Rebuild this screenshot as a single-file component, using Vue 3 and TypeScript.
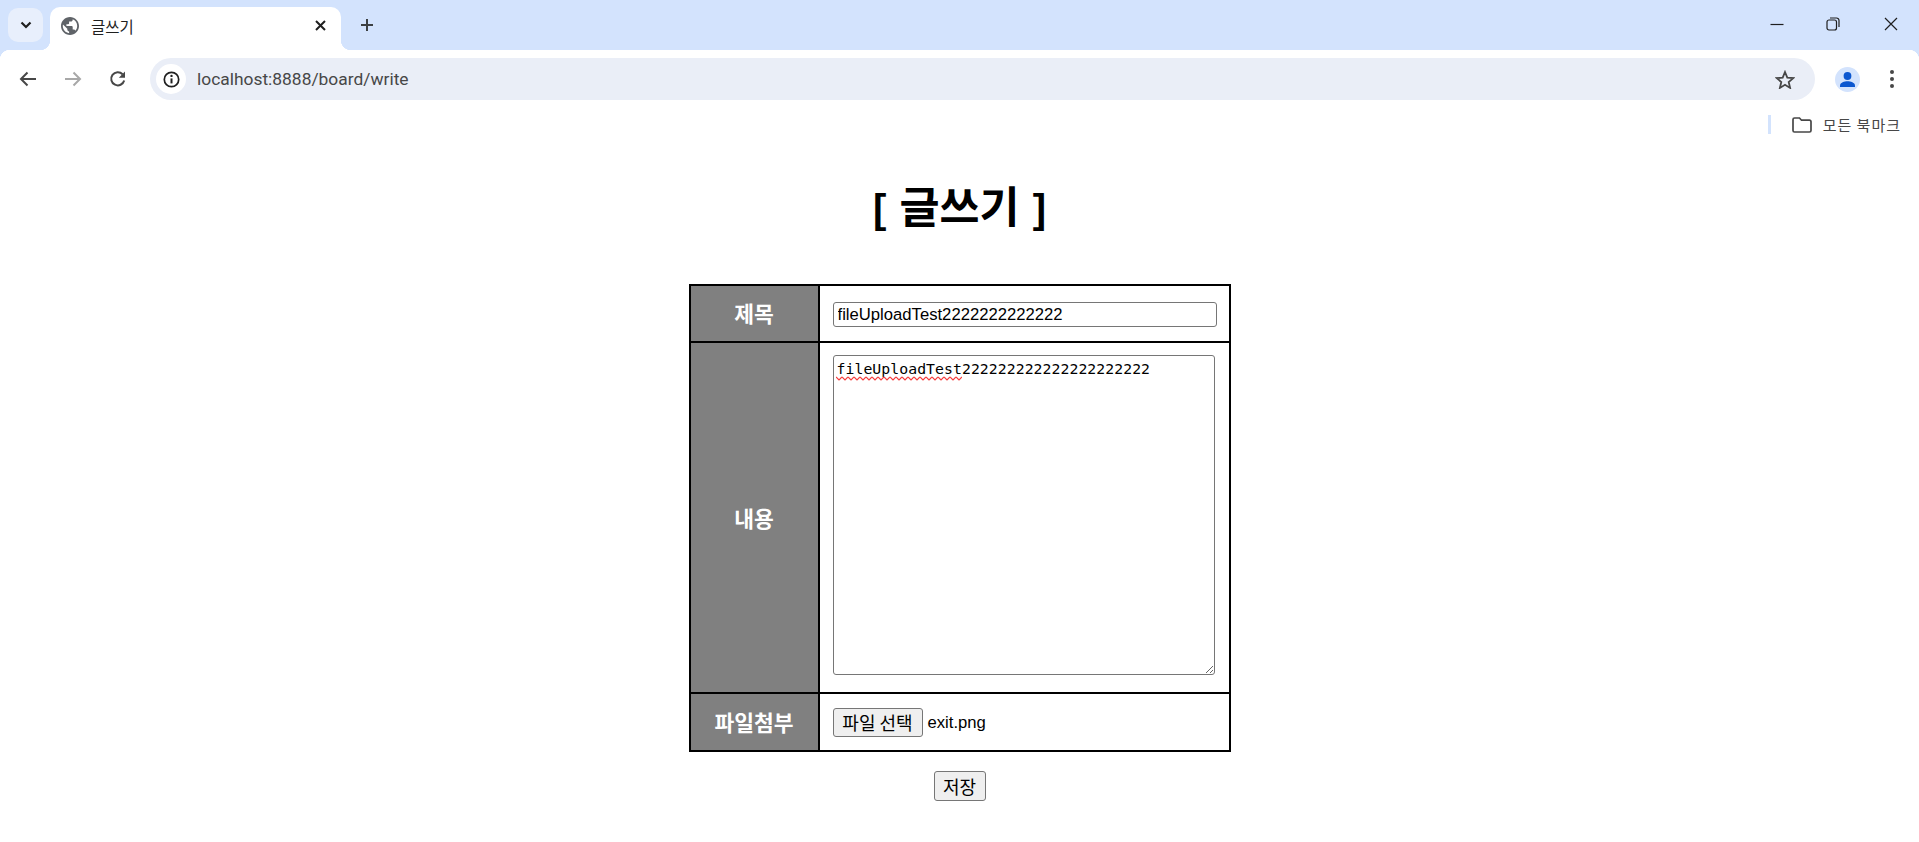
<script setup lang="ts">
const rowTitle = "fileUploadTest2222222222222";
const body = "fileUploadTest222222222222222222222";
</script>

<template>
  <div class="browser">
    <header class="tabstrip">
      <button class="tabsearch" aria-label="탭 검색">
        <svg width="12" height="8" viewBox="0 0 12 8"><path d="M1.500 1.500 6 6l4.500-4.500" fill="none" stroke="#1f1f1f" stroke-width="2.200"/></svg>
      </button>
      <div class="tab">
        <svg class="globe" width="18" height="18" viewBox="2 2 20 20"><path fill="#5f6368" d="M12 2C6.480 2 2 6.480 2 12s4.480 10 10 10 10-4.480 10-10S17.520 2 12 2zm-1 17.930c-3.950-.490-7-3.850-7-7.930 0-.620.080-1.210.210-1.790L9 15v1c0 1.100.900 2 2 2v1.930zm6.900-2.540c-.260-.810-1-1.390-1.900-1.390h-1v-3c0-.550-.450-1-1-1H8v-2h2c.550 0 1-.450 1-1V7h2c1.100 0 2-.900 2-2v-.410c2.930 1.190 5 4.060 5 7.410 0 2.080-.800 3.970-2.100 5.390z"/></svg>
        <span class="tabtitle">글쓰기</span>
        <svg class="tabclose" width="11" height="11" viewBox="0 0 11 11"><path d="M1 1l9 9M10 1l-9 9" stroke="#1f1f1f" stroke-width="2"/></svg>
      </div>
      <svg class="newtab" width="14" height="14" viewBox="0 0 14 14"><path d="M7 1v12M1 7h12" stroke="#3c4043" stroke-width="2"/></svg>
      <div class="winctrls">
        <svg class="wmin" width="14" height="14" viewBox="0 0 14 14"><path d="M0.500 7.500h13" stroke="#1f1f1f" stroke-width="1.200"/></svg>
        <svg width="14" height="14" viewBox="0 0 14 14"><rect x="1" y="3" width="9.500" height="10" rx="2" fill="none" stroke="#1f1f1f" stroke-width="1.200"/><path d="M4 1h6.500A2.500 2.500 0 0 1 13 3.500V10" fill="none" stroke="#1f1f1f" stroke-width="1.200"/></svg>
        <svg width="14" height="14" viewBox="0 0 14 14"><path d="M1 1l12 12M13 1L1 13" stroke="#1f1f1f" stroke-width="1.200"/></svg>
      </div>
    </header>

    <nav class="toolbar">
      <svg class="navicon" width="18" height="16" viewBox="0 0 18 16"><path d="M17 8H2M8.500 1.500 2 8l6.500 6.500" fill="none" stroke="#474747" stroke-width="2"/></svg>
      <svg class="navicon" width="18" height="16" viewBox="0 0 18 16"><path d="M1 8h15M9.500 1.500 16 8l-6.500 6.500" fill="none" stroke="#a8a8a8" stroke-width="2"/></svg>
      <svg class="navicon" width="18" height="18" viewBox="0 0 18 18"><path d="M15.200 10.500A6.600 6.600 0 1 1 13.600 4.200" fill="none" stroke="#474747" stroke-width="2"/><path d="M16 1.500v6.200H9.800z" fill="#474747"/></svg>
      <div class="omnibox">
        <span class="siteinfo">
          <svg width="17" height="17" viewBox="0 0 17 17"><circle cx="8.500" cy="8.500" r="7.200" fill="none" stroke="#1f1f1f" stroke-width="1.700"/><path d="M8.500 7.400v5" stroke="#1f1f1f" stroke-width="2"/><circle cx="8.500" cy="4.900" r="1.200" fill="#1f1f1f"/></svg>
        </span>
        <span class="url">localhost:8888/board/write</span>
        <svg class="star" width="20" height="19" viewBox="0 0 20 19"><path d="M10 2l2.300 5.600 6 .5-4.600 3.900 1.400 5.900L10 14.800 4.900 17.900l1.400-5.900L1.700 8.100l6-.5z" fill="none" stroke="#474747" stroke-width="1.800"/></svg>
      </div>
      <span class="avatar">
        <svg width="25" height="25" viewBox="0 0 25 25"><circle cx="12.500" cy="12.500" r="12.500" fill="#d3e3fd"/><circle cx="12.500" cy="9" r="3.900" fill="#0b57d0"/><path d="M5 20v-1.500c0-2.800 4.500-4.200 7.500-4.200s7.500 1.400 7.500 4.200V20z" fill="#0b57d0"/></svg>
      </span>
      <svg class="dots" width="4" height="18" viewBox="0 0 4 18"><circle cx="2" cy="2" r="2" fill="#474747"/><circle cx="2" cy="9" r="2" fill="#474747"/><circle cx="2" cy="16" r="2" fill="#474747"/></svg>
    </nav>

    <div class="bookmarks">
      <span class="sep"></span>
      <svg width="20" height="16" viewBox="0 0 20 16"><path d="M1 2.500A1.500 1.500 0 0 1 2.500 1h5l2 2.200h8A1.500 1.500 0 0 1 19 4.700v8.800a1.500 1.500 0 0 1-1.500 1.500h-15A1.500 1.500 0 0 1 1 13.500z" fill="none" stroke="#474747" stroke-width="1.700"/></svg>
      <span class="bmtext">모든 북마크</span>
    </div>

    <main class="page">
      <h1 class="heading">[ <span class="headko">글쓰기</span> ]</h1>
      <table class="form">
        <tbody>
          <tr class="r1">
            <th>제목</th>
            <td><input class="titlein" type="text" :value="rowTitle" spellcheck="false" /></td>
          </tr>
          <tr class="r2">
            <th>내용</th>
            <td>
              <div class="areawrap">
                <textarea class="bodyin" spellcheck="false" :value="body"></textarea>
                <svg class="squiggle" width="126" height="5" viewBox="0 0 126 5">
                  <defs>
                    <pattern id="wave" width="6" height="5" patternUnits="userSpaceOnUse">
                      <path d="M0 1l3 3 3-3" fill="none" stroke="#f53c3c" stroke-width="1.200"/>
                    </pattern>
                  </defs>
                  <rect width="126" height="5" fill="url(#wave)"/>
                </svg>
              </div>
            </td>
          </tr>
          <tr class="r3">
            <th>파일첨부</th>
            <td>
              <div class="filerow">
                <button class="btn filebtn" type="button">파일 선택</button>
                <span class="filename">exit.png</span>
              </div>
            </td>
          </tr>
        </tbody>
      </table>
      <div class="actions"><button class="btn savebtn" type="button">저장</button></div>
    </main>
  </div>
</template>

<style>
html, body { margin: 0; background: #fff; overflow: hidden; }
</style>

<style scoped>
.browser {
  width: 1919px;
  height: 842px;
  display: flex;
  flex-direction: column;
  background: #fff;
  font-family: "Liberation Sans", "Noto Sans CJK KR", sans-serif;
  overflow: hidden;
}
.tabstrip {
  height: 50px;
  flex: none;
  background: #d3e3fd;
  display: flex;
  align-items: flex-start;
  padding-left: 8px;
  box-sizing: border-box;
}
.tabsearch {
  width: 35px;
  height: 34px;
  margin-top: 8px;
  border: 0;
  padding: 0;
  border-radius: 10px;
  background: #e8effc;
  display: flex;
  align-items: center;
  justify-content: center;
}
.tab {
  position: relative;
  margin-left: 7px;
  margin-top: 7px;
  width: 291px;
  height: 43px;
  background: #fff;
  border-radius: 10px 10px 0 0;
  display: flex;
  align-items: center;
  padding: 0 10px 0 11px;
  box-sizing: border-box;
}
.tab::before,
.tab::after {
  content: "";
  position: absolute;
  bottom: 0;
  width: 10px;
  height: 10px;
}
.tab::before { left: -10px; background: radial-gradient(circle at 0 0, transparent 10px, #fff 10.500px); }
.tab::after { right: -10px; background: radial-gradient(circle at 100% 0, transparent 10px, #fff 10.500px); }
.globe { margin-top: -6px; flex: none; }
.tabtitle {
  margin-left: 12px;
  font-size: 15.500px;
  color: #1f1f1f;
  font-family: "Noto Sans CJK KR", sans-serif;
  flex: 1;
  margin-top: -6px;
}
.tabclose { margin-right: 5px; margin-top: -6px; }
.newtab { margin-left: 19px; margin-top: 18px; }
.winctrls {
  margin-left: auto;
  display: flex;
  gap: 44px;
  padding: 17px 21px 0 0;
}
.wmin { margin-right: -2px; }
.toolbar {
  height: 58px;
  flex: none;
  background: #fff;
  border-radius: 10px 10px 0 0;
  display: flex;
  align-items: center;
  box-sizing: border-box;
  padding: 0 0 0 19px;
  position: relative;
}
.toolbar::before {
  content: "";
  position: absolute;
  inset: 0 0 auto 0;
  height: 10px;
  pointer-events: none;
  background:
    radial-gradient(circle at 10px 10px, transparent 10px, #d3e3fd 10.500px) left top / 10px 10px no-repeat,
    radial-gradient(circle at 0 10px, transparent 10px, #d3e3fd 10.500px) right top / 10px 10px no-repeat;
}
.navicon { margin-right: 27px; flex: none; }
.navicon:nth-of-type(2) { margin-right: 27px; }
.navicon:nth-of-type(3) { margin-right: 23px; }
.omnibox {
  width: 1665px;
  height: 42px;
  flex: none;
  border-radius: 21px;
  background: #eaeef7;
  display: flex;
  align-items: center;
  box-sizing: border-box;
  padding: 0 20px 0 6px;
}
.siteinfo {
  width: 30px;
  height: 30px;
  border-radius: 50%;
  background: #fff;
  display: flex;
  align-items: center;
  justify-content: center;
  flex: none;
}
.url {
  margin-left: 11px;
  font-family: Roboto, sans-serif;
  font-size: 17.400px;
  color: #474747;
  flex: 1;
}
.avatar { margin-left: 20px; display: flex; flex: none; }
.dots { margin-left: 30px; flex: none; }
.bookmarks {
  height: 34px;
  flex: none;
  display: flex;
  align-items: center;
  justify-content: flex-end;
  padding: 0 18px 1px 0;
  box-sizing: border-box;
  color: #474747;
}
.sep { width: 3px; height: 19px; background: #d3e3fd; margin-right: 21px; }
.bmtext {
  margin-left: 11px;
  font-family: "Noto Sans CJK KR", sans-serif;
  font-size: 15px;
  letter-spacing: 1px;
}
.page { flex: 1; }
.heading {
  margin: 34px 0 0;
  height: 108px;
  font-size: 40px;
  line-height: 58px;
  font-weight: 700;
  text-align: center;
  color: #000;
  word-spacing: 2px;
}
.headko { font-size: 43.500px; font-family: "Noto Sans CJK KR", sans-serif; }
.form {
  border-collapse: collapse;
  width: 542px;
  margin: 0 auto;
  table-layout: fixed;
}
.form th, .form td {
  border: 2px solid #000;
  padding: 0;
}
.form th {
  width: 127px;
  background: #808080;
  color: #fff;
  font-size: 21.500px;
  font-weight: 700;
  font-family: "Noto Sans CJK KR", sans-serif;
  text-align: center;
}
.form td { padding-left: 13px; }
.r1 th { height: 53px; padding-bottom: 2px; }
.r1 td { height: 53px; padding-top: 2px; }
.r2 th { height: 349px; }
.r2 td { height: 343px; padding-bottom: 6px; }
.r3 th { height: 54px; padding-bottom: 2px; }
.r3 td { height: 56px; }
.titlein {
  display: block;
  width: 384px;
  height: 25px;
  box-sizing: border-box;
  border: 1px solid #767676;
  border-radius: 3px;
  padding: 0 4px;
  font-size: 16.670px;
  font-family: "Liberation Sans", sans-serif;
  color: #000;
  outline: none;
}
.areawrap { position: relative; width: 382px; height: 320px; }
.bodyin {
  display: block;
  width: 382px;
  height: 320px;
  box-sizing: border-box;
  border: 1px solid #767676;
  border-radius: 3px;
  padding: 4px 3px;
  font-family: "DejaVu Sans Mono", monospace;
  font-size: 14.800px;
  letter-spacing: 0.050px;
  line-height: 18px;
  color: #000;
  outline: none;
}
.squiggle { position: absolute; left: 3px; top: 21px; pointer-events: none; }
.filerow { display: flex; align-items: center; }
.btn {
  box-sizing: border-box;
  border: 1px solid #767676;
  border-radius: 3px;
  background: #efefef;
  color: #000;
  padding: 0;
  font-size: 18px;
  font-family: "Noto Sans CJK KR", sans-serif;
  line-height: 1;
}
.filebtn { width: 90px; height: 29px; }
.filename { margin: 2px 0 0 5px; font-size: 16.670px; color: #000; }
.actions { display: flex; justify-content: center; margin-top: 19px; }
.savebtn { width: 52px; height: 30px; }
</style>
